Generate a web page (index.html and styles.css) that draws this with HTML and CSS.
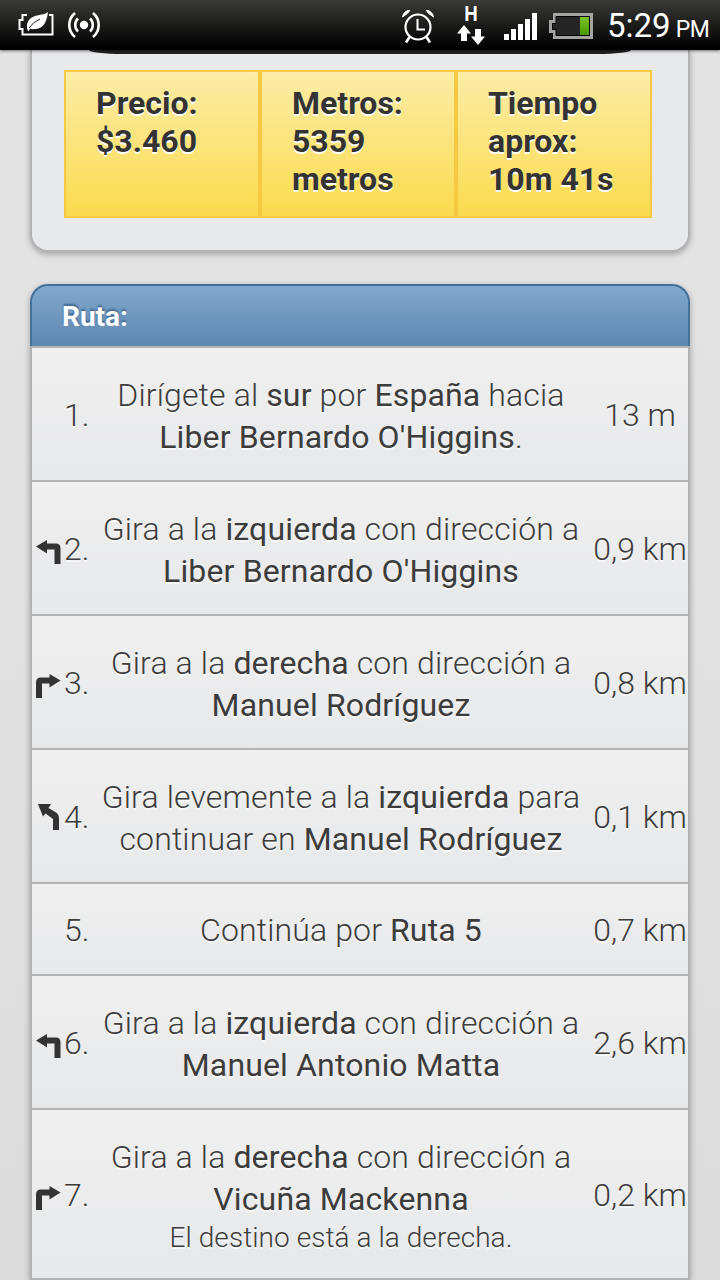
FILE: index.html
```html
<!DOCTYPE html>
<html lang="es">
<head>
  <meta charset="UTF-8" />
  <meta name="viewport" content="width=device-width, initial-scale=1.0"/>
  <title>Ruta</title>
  <link rel="stylesheet" href="styles.css">
</head>
<body>
  <svg class="defs" width="0" height="0">
    <symbol id="left" viewBox="0 0 26 24">
      <path d="M0 6.500L11 0V3.500H20Q24.500 3.500 24.500 8.500V24H18.500V9.500H11V13.500Z"/>
    </symbol>
    <symbol id="right" viewBox="0 0 26 24">
      <path d="M24.500 6.500L13.500 0V3.500H5Q0 3.500 0 8.500V24H6V9.500H13.500V13.500Z"/>
    </symbol>
    <symbol id="slight-left" viewBox="0 0 26 26">
      <path d="M2 0H15L12.500 4L20 8.500Q23 10.500 23 14V26H17V15L9.500 9.500L7 12.500Z"/>
    </symbol>
  </svg>

  <header class="statusbar">
    <svg class="icon-eco" width="36" height="26" viewBox="0 0 36 26">
      <path d="M9 3H4.500V8H1.500V17H4.500V22.500H34.500V3H31" fill="none" stroke="#fff" stroke-width="2"/>
      <path d="M9.500 18C7.500 11 11 6 17 4C22 2.500 26 3 30 0C29 7 27 17 17 17Q14 17.500 12 16.500L10.500 19.500Z" fill="#fff"/>
      <path d="M11 16Q15 10 22 7" fill="none" stroke="#222" stroke-width="1"/>
    </svg>
    <svg class="icon-cast" width="36" height="28" viewBox="0 0 36 28">
      <circle cx="18" cy="14" r="4.200" fill="#fff"/>
      <path d="M12 7.500A9 9 0 0 0 12 20.500M24 7.500A9 9 0 0 1 24 20.500M9 2A15.500 15.500 0 0 0 9 26M27 2A15.500 15.500 0 0 1 27 26" fill="none" stroke="#fff" stroke-width="2.600"/>
    </svg>
    <span class="spacer"></span>
    <svg class="icon-alarm" width="32" height="34" viewBox="0 0 32 34">
      <circle cx="16" cy="17" r="12.500" fill="none" stroke="#fff" stroke-width="2.200"/>
      <path d="M15.500 9V19.500H23" fill="none" stroke="#fff" stroke-width="2"/>
      <path d="M7.500 27L4 32.500M24.500 27L28 32.500" stroke="#fff" stroke-width="2.600"/>
      <path d="M0.500 7Q1.500 1 8 0Q7 3 0.500 7ZM31.500 7Q30.500 1 24 0Q25 3 31.500 7Z" fill="#fff" stroke="#fff" stroke-width="1"/>
    </svg>
    <div class="data">
      <span class="data-type">H</span>
      <svg width="28" height="20" viewBox="0 0 28 20">
        <path d="M7 0L14 8.500H10V16H4V8.500H0Z"/>
        <path d="M21 20L28 11.500H24V4H18V11.500H14Z"/>
      </svg>
    </div>
    <svg class="icon-signal" width="34" height="27" viewBox="0 0 34 27">
      <path d="M0 21H5V27H0ZM7 16H12V27H7ZM14 11H19V27H14ZM21 6H26V27H21ZM28 0H33V27H28Z" fill="#fff"/>
    </svg>
    <svg class="icon-battery" width="44" height="26" viewBox="0 0 44 26">
      <defs>
        <linearGradient id="charge" x1="0" y1="0" x2="0" y2="1">
          <stop offset="0" stop-color="#7cc22a"/>
          <stop offset="1" stop-color="#459a00"/>
        </linearGradient>
      </defs>
      <path d="M5.500 1.500H42.500V24.500H5.500V18.500H1.500V8.500H5.500Z" fill="#252525" stroke="#a3a3a3" stroke-width="3"/>
      <path d="M7 3.500H40.500V22.500H7V16.500H3.500V10.500H7Z" fill="none" stroke="#000" stroke-width="1"/>
      <rect x="31" y="4" width="9" height="18" fill="url(#charge)"/>
    </svg>
    <div class="clock">5:29<small>PM</small></div>
  </header>

  <main>
    <section class="summary">
      <div class="map"></div>
      <div class="facts">
        <div class="fact">Precio:<br>$3.460</div>
        <div class="fact">Metros:<br>5359<br>metros</div>
        <div class="fact">Tiempo<br>aprox:<br>10m 41s</div>
      </div>
    </section>

    <section class="route">
      <h2>Ruta:</h2>
      <ol>
        <li>
          <span class="turn"></span>
          <span class="num">1.</span>
          <p>Dirígete al <b>sur</b> por <b>España</b> hacia<br><b>Liber Bernardo O'Higgins</b>.</p>
          <span class="dist">13 m</span>
        </li>
        <li>
          <span class="turn"><svg width="26" height="24"><use href="#left"/></svg></span>
          <span class="num">2.</span>
          <p>Gira a la <b>izquierda</b> con dirección a<br><b>Liber Bernardo O'Higgins</b></p>
          <span class="dist">0,9 km</span>
        </li>
        <li>
          <span class="turn"><svg width="26" height="24"><use href="#right"/></svg></span>
          <span class="num">3.</span>
          <p>Gira a la <b>derecha</b> con dirección a<br><b>Manuel Rodríguez</b></p>
          <span class="dist">0,8 km</span>
        </li>
        <li>
          <span class="turn slight"><svg width="26" height="26"><use href="#slight-left"/></svg></span>
          <span class="num">4.</span>
          <p>Gira levemente a la <b>izquierda</b> para<br>continuar en <b>Manuel Rodríguez</b></p>
          <span class="dist">0,1 km</span>
        </li>
        <li>
          <span class="turn"></span>
          <span class="num">5.</span>
          <p>Continúa por <b>Ruta 5</b></p>
          <span class="dist">0,7 km</span>
        </li>
        <li>
          <span class="turn"><svg width="26" height="24"><use href="#left"/></svg></span>
          <span class="num">6.</span>
          <p>Gira a la <b>izquierda</b> con dirección a<br><b>Manuel Antonio Matta</b></p>
          <span class="dist">2,6 km</span>
        </li>
        <li>
          <span class="turn"><svg width="26" height="24"><use href="#right"/></svg></span>
          <span class="num">7.</span>
          <p>Gira a la <b>derecha</b> con dirección a<br><b>Vicuña Mackenna</b><small>El destino está a la derecha.</small></p>
          <span class="dist">0,2 km</span>
        </li>
      </ol>
    </section>
  </main>
</body>
</html>
```
FILE: styles.css
```css
* {
  box-sizing: border-box;
}
body {
  margin: 0;
  height: 1280px;
  overflow: hidden;
  font-family: Roboto, sans-serif;
  color: #333;
  background: linear-gradient(#e5e5e5, #dcdcdc);
}
.defs {
  display: block;
}

/* status bar */
.statusbar {
  position: relative;
  display: flex;
  align-items: flex-start;
  height: 50px;
  color: white;
  background: linear-gradient(#3a3a38, #000 95%);
  box-shadow: 0 1px 3px rgba(0, 0, 0, 0.5);
}
.icon-eco {
  margin: 12px 0 0 18px;
}
.icon-cast {
  margin: 11px 0 0 12px;
}
.spacer {
  flex: 1;
}
.icon-alarm {
  margin: 10px 23px 0 0;
}
.data {
  width: 28px;
  margin: 4px 19px 0 0;
  text-align: center;
}
.data-type {
  display: block;
  height: 21px;
  font-family: "Liberation Sans", sans-serif;
  font-size: 22px;
  font-weight: 700;
  line-height: 20px;
  transform: scaleX(0.85);
}
.data svg {
  display: block;
  fill: white;
}
.icon-signal {
  margin: 13px 11px 0 0;
}
.icon-battery {
  margin: 13px 14px 0 0;
}
.clock {
  width: 113px;
  font-size: 33px;
  line-height: 52px;
  white-space: nowrap;
}
.clock small {
  margin-left: 5px;
  font-size: 23px;
  letter-spacing: -0.5px;
}

/* price, distance and time */
.summary {
  height: 202px;
  margin: 0 30px;
  border: 2px solid #b3b3b5;
  border-top: 0;
  border-radius: 0 0 18px 18px;
  background: #e8e9eb;
  box-shadow: 0 2px 6px rgba(0, 0, 0, 0.3);
}
.map {
  height: 4px;
  margin: 0 57px 16px;
  border-radius: 0 0 34px 34px / 0 0 4px 4px;
  background: #222;
}
.facts {
  display: grid;
  grid-template-columns: repeat(3, 196px);
  margin-left: 32px;
}
.fact {
  height: 148px;
  padding: 12px 30px;
  border: 2px solid #f7c942;
  background: linear-gradient(#fceda7, #fadb4e);
  font-size: 32px;
  font-weight: 700;
  line-height: 38px;
  text-shadow: 0 2px 0 #fff;
  white-space: nowrap;
}

/* directions */
.route {
  margin: 32px 30px 0;
  border-radius: 18px 18px 0 0;
  box-shadow: 0 2px 6px rgba(0, 0, 0, 0.3);
}
.route h2 {
  height: 62px;
  margin: 0;
  padding: 0 30px;
  border: 2px solid #456f9a;
  border-bottom: 0;
  border-radius: 18px 18px 0 0;
  background: linear-gradient(#81a8ce, #5e87b0);
  color: white;
  font-size: 28px;
  font-weight: 700;
  line-height: 62px;
  text-shadow: 0 -2px 2px #3e6790;
}
.route ol {
  margin: 0;
  padding: 0;
  border: solid #b3b3b3;
  border-width: 0 2px;
  list-style: none;
}
.route li {
  display: grid;
  grid-template-columns: 32px 32px 490px 102px;
  align-items: center;
  padding: 26px 0 22px;
  border-top: 2px solid #b3b3b3;
  background: linear-gradient(#f0f0f0, #e7e8ea);
  color: #3c3c3c;
  font-size: 32px;
  font-weight: 300;
  line-height: 42px;
  text-shadow: 0 2px 0 #f8f8f8;
  white-space: nowrap;
}
.route li:last-child {
  border-bottom: 2px solid #b3b3b3;
}
.turn svg {
  display: block;
  margin: 3px 0 0 4px;
  fill: #333;
}
.turn.slight svg {
  margin: 0 0 2px 4px;
}
.num, .dist {
  margin: -1px 0 1px;
}
.route p {
  margin: 0;
  text-align: center;
  letter-spacing: 0.14px;
}
.route li:nth-child(5) p {
  margin: -1px 0 1px;
}
.route b {
  font-weight: 400;
}
.route small {
  display: block;
  font-size: 28px;
  line-height: 36px;
  letter-spacing: 0.06px;
}
.dist {
  padding-left: 6px;
  text-align: center;
}
```
